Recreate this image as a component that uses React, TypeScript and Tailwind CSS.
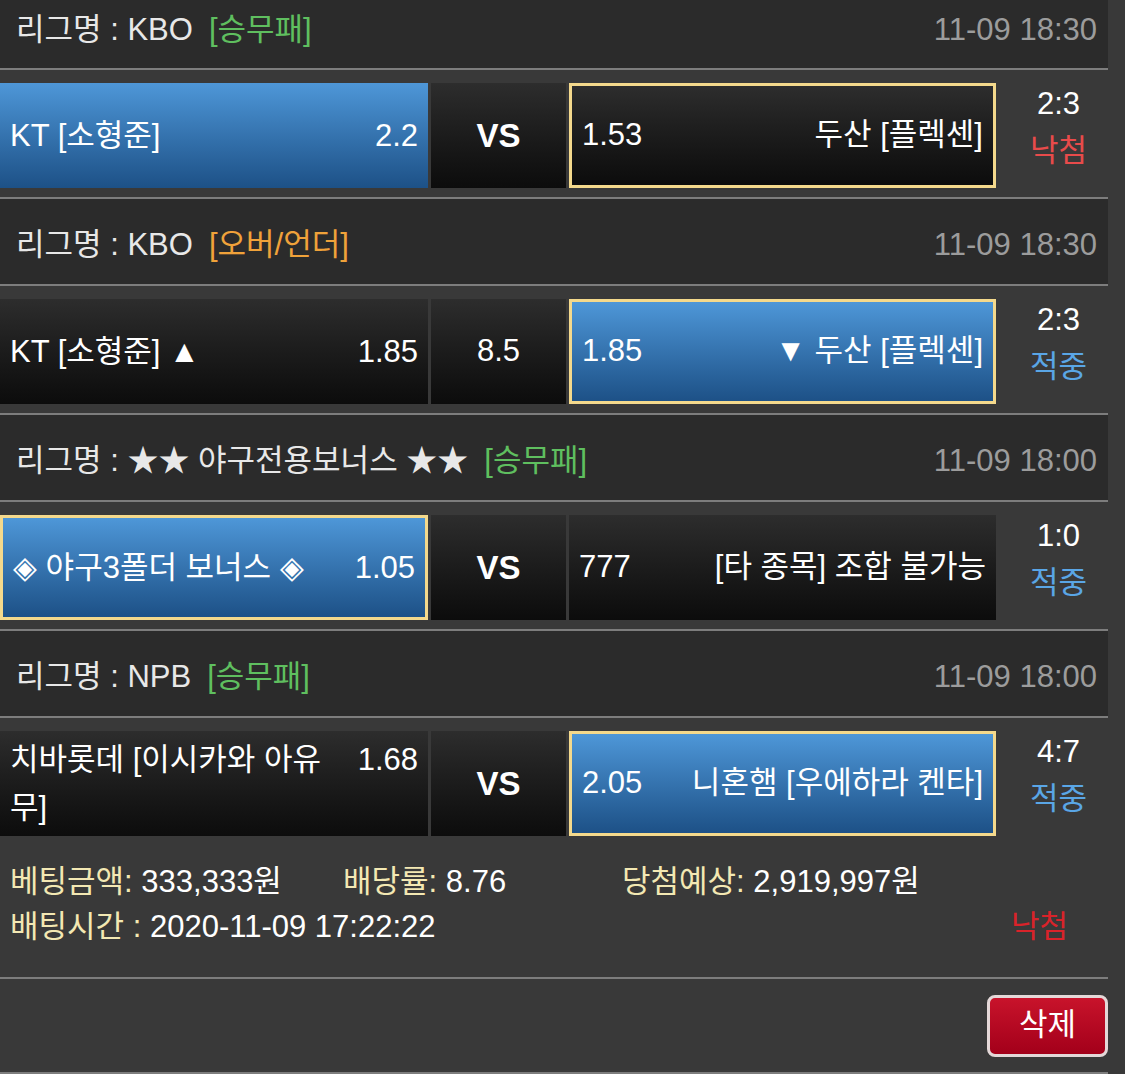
type Side = { name: string; odds: string; win?: boolean; pick?: boolean }

type Game = {
  league: string
  tag: string
  tagColor: string
  time: string
  home: Side
  mid: string
  midBold?: boolean
  away: Side
  score: string
  result: string
  resultColor: string
}

const games: Game[] = [
  {
    league: "KBO",
    tag: "[승무패]",
    tagColor: "text-[#5fbf5f]",
    time: "11-09 18:30",
    home: { name: "KT [소형준]", odds: "2.2", win: true },
    mid: "VS",
    midBold: true,
    away: { name: "두산 [플렉센]", odds: "1.53", pick: true },
    score: "2:3",
    result: "낙첨",
    resultColor: "text-[#e84b4b]",
  },
  {
    league: "KBO",
    tag: "[오버/언더]",
    tagColor: "text-[#f0a23a]",
    time: "11-09 18:30",
    home: { name: "KT [소형준] ▲", odds: "1.85" },
    mid: "8.5",
    away: { name: "▼ 두산 [플렉센]", odds: "1.85", win: true, pick: true },
    score: "2:3",
    result: "적중",
    resultColor: "text-[#5aa6e6]",
  },
  {
    league: "★★ 야구전용보너스 ★★",
    tag: "[승무패]",
    tagColor: "text-[#5fbf5f]",
    time: "11-09 18:00",
    home: { name: "◈ 야구3폴더 보너스 ◈", odds: "1.05", win: true, pick: true },
    mid: "VS",
    midBold: true,
    away: { name: "[타 종목] 조합 불가능", odds: "777" },
    score: "1:0",
    result: "적중",
    resultColor: "text-[#5aa6e6]",
  },
  {
    league: "NPB",
    tag: "[승무패]",
    tagColor: "text-[#5fbf5f]",
    time: "11-09 18:00",
    home: { name: "치바롯데 [이시카와 아유 무]", odds: "1.68" },
    mid: "VS",
    midBold: true,
    away: { name: "니혼햄 [우에하라 켄타]", odds: "2.05", win: true, pick: true },
    score: "4:7",
    result: "적중",
    resultColor: "text-[#5aa6e6]",
  },
]

const Line = () => <div className="h-[2px] w-full bg-[#7d7d7d]" />

const cellBg = (s: Side) =>
  s.win
    ? "bg-linear-to-b from-[#4e97d8] to-[#1d5187]"
    : "bg-linear-to-b from-[#2d2d2d] to-[#0c0c0c]"

const cellBorder = (s: Side) => (s.pick ? "border-[3px] border-[#f4d98c]" : "")

const Header = ({ g, first }: { g: Game; first?: boolean }) => (
  <div
    className={`flex items-center justify-between bg-[#2b2b2b] pl-[16px] pr-[11px] ${
      first ? "h-[68px] pb-[8px]" : "h-[85px] pt-[7px]"
    }`}
  >
    <div className="text-[31px] text-[#e8e8e8]">
      리그명 : {g.league}
      <span className={`ml-[16px] ${g.tagColor}`}>{g.tag}</span>
    </div>
    <div className="text-[31px] text-[#9c9c9c]">{g.time}</div>
  </div>
)

const Match = ({ g }: { g: Game }) => (
  <div className="flex gap-[3px] pt-[13px] pb-[9px]">
    {/* home */}
    <div className={`w-[428px] h-[105px] flex items-center px-[10px] text-white text-[31px] ${cellBg(g.home)} ${cellBorder(g.home)}`}>
      <div className="flex w-full items-start justify-between gap-[8px] leading-[48px]">
        <span className="min-w-0">{g.home.name}</span>
        <span className="shrink-0">{g.home.odds}</span>
      </div>
    </div>

    {/* vs / handicap */}
    <div className={`w-[135px] h-[105px] flex items-center justify-center text-white ${cellBg({ name: "", odds: "" })} ${g.midBold ? "font-bold text-[33px]" : "text-[31px]"}`}>
      {g.mid}
    </div>

    {/* away */}
    <div className={`w-[427px] h-[105px] flex items-center px-[10px] text-white text-[31px] ${cellBg(g.away)} ${cellBorder(g.away)}`}>
      <div className="flex w-full items-center justify-between gap-[24px]">
        <span className="shrink-0">{g.away.odds}</span>
        <span className="text-right">{g.away.name}</span>
      </div>
    </div>

    {/* score */}
    <div className="flex-1 -mt-[3px] pl-[10px] flex flex-col items-center text-[31px] leading-[47px]">
      <span className="text-white">{g.score}</span>
      <span className={g.resultColor}>{g.result}</span>
    </div>
  </div>
)

export default function App() {
  return (
    <div className="min-h-screen w-full bg-[#393939] font-['Liberation_Sans','Noto_Sans_CJK_KR',sans-serif]">
      <div className="w-[1108px]">
        {games.map((g, i) => (
          <div key={i}>
            {i > 0 && <Line />}
            <Header g={g} first={i === 0} />
            <Line />
            <Match g={g} />
          </div>
        ))}

        {/* summary */}
        <div className="h-[132px] pt-[14px] pl-[10px] pr-[40px] text-[31px] leading-[45px]">
          <div className="flex">
            <span className="w-[333px]">
              <span className="text-[#f3e8b3]">베팅금액:</span>
              <span className="text-white"> 333,333원</span>
            </span>
            <span className="w-[279px]">
              <span className="text-[#f3e8b3]">배당률:</span>
              <span className="text-white"> 8.76</span>
            </span>
            <span>
              <span className="text-[#f3e8b3]">당첨예상:</span>
              <span className="text-white"> 2,919,997원</span>
            </span>
          </div>
          <div className="flex justify-between">
            <span>
              <span className="text-[#f3e8b3]">배팅시간 :</span>
              <span className="text-white"> 2020-11-09 17:22:22</span>
            </span>
            <span className="text-[#d9232a]">낙첨</span>
          </div>
        </div>
        <Line />

        {/* actions */}
        <div className="h-[93px] flex items-center justify-end">
          <button className="w-[121px] h-[62px] rounded-[8px] border-[3px] border-[#e4d8d8] bg-linear-to-b from-[#c8132b] to-[#a3001a] text-white text-[31px]">
            삭제
          </button>
        </div>
        <Line />
      </div>
    </div>
  )
}
